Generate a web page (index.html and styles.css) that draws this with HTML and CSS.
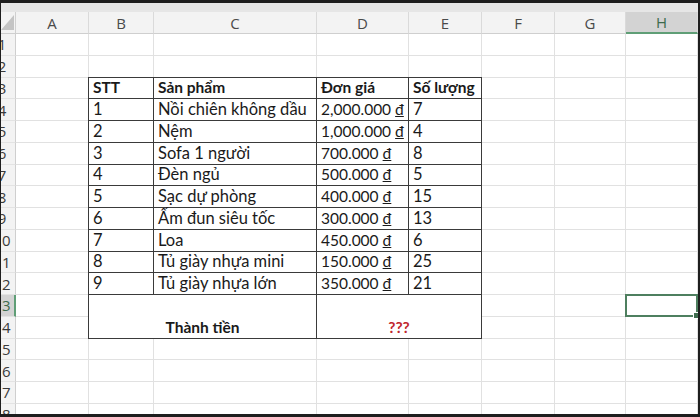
FILE: index.html
```html
<!DOCTYPE html>
<html lang="vi">
<head>
<meta charset="utf-8">
<title>Bảng sản phẩm</title>
<link rel="stylesheet" href="styles.css">
</head>
<body>
<div class="frame">
  <div class="sheet">
    <div class="corner"><svg width="13" height="15" viewBox="0 0 13 15"><polygon points="13,0 13,15 0,15" fill="#c4c4c4"/></svg></div>
    <div class="ch">A</div><div class="ch">B</div><div class="ch">C</div><div class="ch">D</div><div class="ch">E</div><div class="ch">F</div><div class="ch">G</div><div class="ch sel">H</div>

    <div class="rh"><span>1</span></div><div class="c"></div><div class="c"></div><div class="c"></div><div class="c"></div><div class="c"></div><div class="c"></div><div class="c"></div><div class="c"></div>
    <div class="rh"><span>2</span></div><div class="c"></div><div class="c"></div><div class="c"></div><div class="c"></div><div class="c"></div><div class="c"></div><div class="c"></div><div class="c"></div>
    <div class="rh"><span>3</span></div><div class="c"></div><div class="c"></div><div class="c"></div><div class="c"></div>
    <div class="rh"><span>4</span></div><div class="c"></div><div class="c"></div><div class="c"></div><div class="c"></div>
    <div class="rh"><span>5</span></div><div class="c"></div><div class="c"></div><div class="c"></div><div class="c"></div>
    <div class="rh"><span>6</span></div><div class="c"></div><div class="c"></div><div class="c"></div><div class="c"></div>
    <div class="rh"><span>7</span></div><div class="c"></div><div class="c"></div><div class="c"></div><div class="c"></div>
    <div class="rh"><span>8</span></div><div class="c"></div><div class="c"></div><div class="c"></div><div class="c"></div>
    <div class="rh"><span>9</span></div><div class="c"></div><div class="c"></div><div class="c"></div><div class="c"></div>
    <div class="rh"><span>10</span></div><div class="c"></div><div class="c"></div><div class="c"></div><div class="c"></div>
    <div class="rh"><span>11</span></div><div class="c"></div><div class="c"></div><div class="c"></div><div class="c"></div>
    <div class="rh"><span>12</span></div><div class="c"></div><div class="c"></div><div class="c"></div><div class="c"></div>
    <div class="rh sel"><span>13</span></div><div class="c"></div><div class="c"></div><div class="c"></div><div class="c sel"></div>
    <div class="rh"><span>14</span></div><div class="c"></div><div class="c"></div><div class="c"></div><div class="c"></div>
    <div class="rh"><span>15</span></div><div class="c"></div><div class="c"></div><div class="c"></div><div class="c"></div><div class="c"></div><div class="c"></div><div class="c"></div><div class="c"></div>
    <div class="rh"><span>16</span></div><div class="c"></div><div class="c"></div><div class="c"></div><div class="c"></div><div class="c"></div><div class="c"></div><div class="c"></div><div class="c"></div>
    <div class="rh"><span>17</span></div><div class="c"></div><div class="c"></div><div class="c"></div><div class="c"></div><div class="c"></div><div class="c"></div><div class="c"></div><div class="c"></div>
    <div class="rh"><span>18</span></div><div class="c"></div><div class="c"></div><div class="c"></div><div class="c"></div><div class="c"></div><div class="c"></div><div class="c"></div><div class="c"></div>

    <div class="tbl">
      <div class="t b">STT</div><div class="t b">Sản phẩm</div><div class="t b">Đơn giá</div><div class="t b">Số lượng</div>
      <div class="t">1</div><div class="t">Nồi chiên không dầu</div><div class="t num">2,000.000 <span class="vnd">đ</span></div><div class="t">7</div>
      <div class="t">2</div><div class="t">Nệm</div><div class="t num">1,000.000 <span class="vnd">đ</span></div><div class="t">4</div>
      <div class="t">3</div><div class="t">Sofa 1 người</div><div class="t num">700.000 <span class="vnd">đ</span></div><div class="t">8</div>
      <div class="t">4</div><div class="t">Đèn ngủ</div><div class="t num">500.000 <span class="vnd">đ</span></div><div class="t">5</div>
      <div class="t">5</div><div class="t">Sạc dự phòng</div><div class="t num">400.000 <span class="vnd">đ</span></div><div class="t">15</div>
      <div class="t">6</div><div class="t">Ấm đun siêu tốc</div><div class="t num">300.000 <span class="vnd">đ</span></div><div class="t">13</div>
      <div class="t">7</div><div class="t">Loa</div><div class="t num">450.000 <span class="vnd">đ</span></div><div class="t">6</div>
      <div class="t">8</div><div class="t">Tủ giày nhựa mini</div><div class="t num">150.000 <span class="vnd">đ</span></div><div class="t">25</div>
      <div class="t">9</div><div class="t">Tủ giày nhựa lớn</div><div class="t num">350.000 <span class="vnd">đ</span></div><div class="t">21</div>
      <div class="t b total">Thành tiền</div><div class="t b total red">???</div>
    </div>
  </div>
</div>
</body>
</html>
```

FILE: styles.css
```css
html, body {
  margin: 0;
  padding: 0;
  background: #1e1e1e;
}

.frame {
  width: 700px;
  height: 417px;
  box-sizing: border-box;
  border-top: 3px solid #1e1e1e;
  border-bottom: 3px solid #1e1e1e;
  border-left: 1px solid #1e1e1e;
  border-right: 2px solid #1e1e1e;
  background: #e6e6e6;
  padding-top: 9px;
  overflow: hidden;
}

.sheet {
  display: grid;
  grid-template-columns: 15px 73px 65px 163px 92px 73px 73px 71px 1fr;
  grid-template-rows: 22px repeat(18, 21.75px);
  background: #ffffff;
  height: 100%;
  overflow: hidden;
  font-family: "Lato", "Open Sans", sans-serif;
}

.corner {
  background: #f3f3f3;
  border-right: 1px solid #d0d0d0;
  border-bottom: 1px solid #cfcfcf;
  box-sizing: border-box;
  display: flex;
  align-items: flex-end;
  justify-content: flex-end;
  padding: 0 1px 3px 0;
}

.ch {
  background: #f3f3f3;
  border-right: 1px solid #dadada;
  border-bottom: 1px solid #cfcfcf;
  box-sizing: border-box;
  display: flex;
  align-items: center;
  justify-content: center;
  font-family: "Open Sans", sans-serif;
  font-size: 15px;
  color: #4a4a4a;
}

.ch.sel {
  background: #d3d3d3;
  border-bottom: 2px solid #5f9e76;
  color: #3d6b4d;
}

.rh {
  background: #f3f3f3;
  border-right: 1px solid #cfcfcf;
  border-bottom: 1px solid #e3e3e3;
  box-sizing: border-box;
  overflow: hidden;
  display: flex;
  align-items: center;
  font-family: "Open Sans", sans-serif;
  font-size: 15px;
  color: #3a3a3a;
}

.rh span {
  display: block;
  flex: none;
  width: 26px;
  margin-left: -12px;
  text-align: center;
}

.rh.sel {
  background: #d3d3d3;
  border-right: 2px solid #5f9e76;
  color: #3d6b4d;
}

.c {
  border-right: 1px solid #e1e1e1;
  border-bottom: 1px solid #e1e1e1;
  box-sizing: border-box;
}

.c.sel {
  position: relative;
  border: 2px solid #4e7f5f;
  margin: -1px 0 0 -1px;
}

.c.sel::after {
  content: "";
  position: absolute;
  right: -4px;
  bottom: -4px;
  width: 5px;
  height: 5px;
  background: #3f6e50;
  border: 1px solid #ffffff;
}

.tbl {
  grid-column: 3 / 7;
  grid-row: 4 / 16;
  margin: -1px 0 0 -1px;
  border-top: 1px solid #3a3a3a;
  border-left: 1px solid #3a3a3a;
  background: #ffffff;
  display: grid;
  grid-template-columns: 65px 163px 92px 73px;
  grid-template-rows: repeat(12, 1fr);
  font-size: 16.5px;
  color: #1a1a1a;
}

.t {
  border-right: 1px solid #3a3a3a;
  border-bottom: 1px solid #3a3a3a;
  box-sizing: border-box;
  padding: 0 4px 2px;
  display: flex;
  align-items: flex-end;
  white-space: nowrap;
  line-height: 18px;
}

.t.b {
  font-weight: 700;
  font-size: 15.5px;
}

.t.num {
  font-size: 15.5px;
}

.vnd {
  text-decoration: underline;
  margin-left: 4px;
}

.total {
  grid-column: span 2;
  grid-row: span 2;
  justify-content: center;
}

.red {
  color: #c0262d;
}
```
